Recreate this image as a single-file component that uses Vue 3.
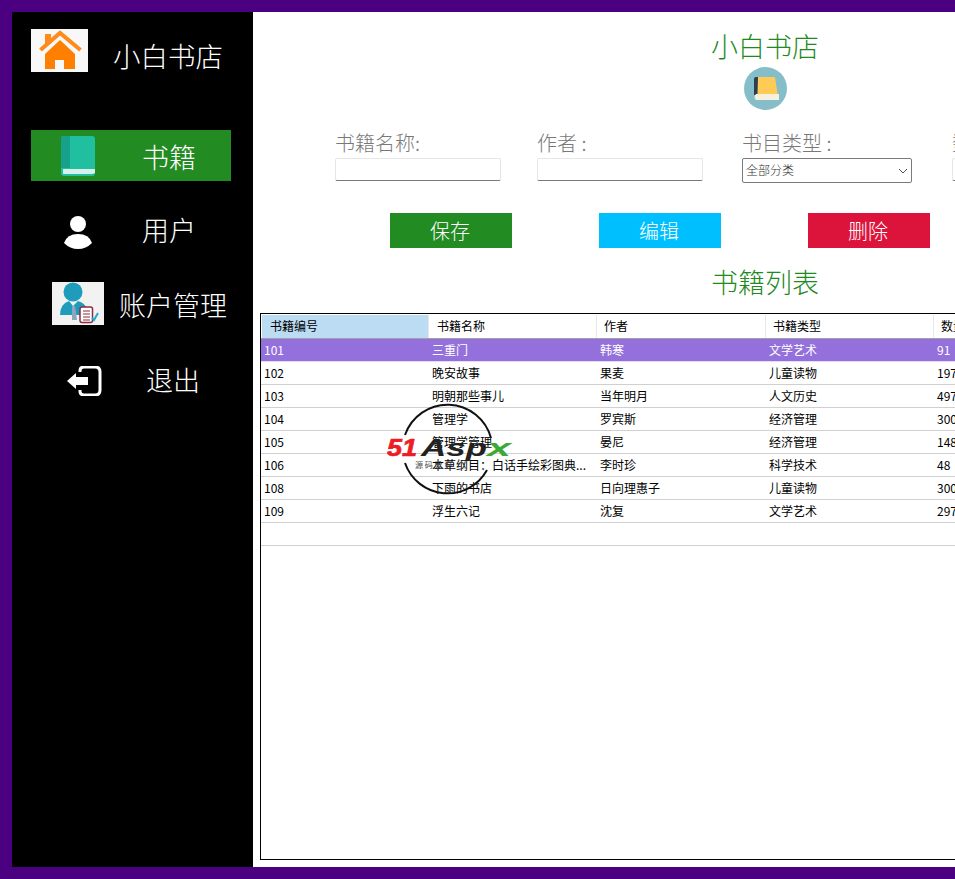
<script setup>
const columns = [
  { label: '书籍编号', w: 168 },
  { label: '书籍名称', w: 168 },
  { label: '作者', w: 169 },
  { label: '书籍类型', w: 168 },
  { label: '数量', w: 120 }
]
const books = [
  ['101', '三重门', '韩寒', '文学艺术', '91'],
  ['102', '晚安故事', '果麦', '儿童读物', '197'],
  ['103', '明朝那些事儿', '当年明月', '人文历史', '497'],
  ['104', '管理学', '罗宾斯', '经济管理', '300'],
  ['105', '管理学管理', '晏尼', '经济管理', '148'],
  ['106', '本草纲目：白话手绘彩图典...', '李时珍', '科学技术', '48'],
  ['108', '下雨的书店', '日向理惠子', '儿童读物', '300'],
  ['109', '浮生六记', '沈复', '文学艺术', '297'],
  ['', '', '', '', '']
]
</script>

<template>
  <div class="page">
    <aside class="side">
      <div class="brand">
        <div class="home-box">
          <svg width="57" height="43" viewBox="0 0 57 43">
            <rect x="14" y="5" width="6" height="10" fill="#ff8c1a" />
            <path d="M29 11 L44 25 V40 H33 V31 H24 V40 H14 V25 Z" fill="#ff8000" />
            <path d="M9.5 21 L29 4 L49.5 21" fill="none" stroke="#ff8c1a" stroke-width="4" />
          </svg>
        </div>
        <span class="brand-name">小白书店</span>
      </div>
      <nav class="menu">
        <div class="item active">
          <span class="slot slot-book">
            <svg width="34" height="40" viewBox="0 0 34 40">
              <rect width="34" height="40" rx="3" fill="#1fbf9f" />
              <path d="M3 0 H9 V32 H0 V3 Q0 0 3 0 Z" fill="#17a08c" />
              <path d="M2 33 H34 V37 Q33 38 30 38 H2 Z" fill="#d9efe9" />
            </svg>
          </span>
          <span class="label l-book">书籍</span>
        </div>
        <div class="item">
          <span class="slot slot-user">
            <svg width="28" height="34" viewBox="0 0 28 34">
              <circle cx="14" cy="8" r="8" fill="#fff" />
              <path d="M0 27 Q3 18 14 18 Q25 18 28 27 Q22 33 14 33 Q6 33 0 27 Z" fill="#fff" />
            </svg>
          </span>
          <span class="label l-user">用户</span>
        </div>
        <div class="item">
          <span class="account-box">
            <svg width="52" height="43" viewBox="0 0 52 43">
              <circle cx="21" cy="10" r="9.5" fill="#1f9cbc" />
              <path d="M8 33 Q8 22 17 19 L21 24 L26 19 Q33 21 35 27 V33 Z" fill="#1f9cbc" />
              <path d="M20 24 L23 24 L25 38 H20 Z" fill="#8fa4bd" />
              <rect x="28" y="25" width="12.5" height="15.5" rx="2" fill="#fff" stroke="#8a2d3f" stroke-width="1.5" />
              <path d="M31 29 H38 M31 32 H38 M31 35 H38 M31 38 H38" stroke="#8a2d3f" stroke-width="1.2" />
              <path d="M40 36 L42 38 L46 31" fill="none" stroke="#2aa7c9" stroke-width="2" />
            </svg>
          </span>
          <span class="label l-account">账户管理</span>
        </div>
        <div class="item">
          <span class="slot slot-exit">
            <svg width="36" height="30" viewBox="0 0 36 30">
              <path d="M14 6 V5 Q14 1 18 1 H29 Q34 1 34 6 V24 Q34 29 29 29 H18 Q14 29 14 25 V24" fill="none" stroke="#fff" stroke-width="3" />
              <path d="M1 15 L10 7 V11 H22 V19 H10 V23 Z" fill="#fff" />
            </svg>
          </span>
          <span class="label l-exit">退出</span>
        </div>
      </nav>
    </aside>

    <main class="main">
      <div class="inner">
        <h1 class="title">小白书店</h1>
        <div class="logo">
          <svg width="43" height="43" viewBox="0 0 43 43">
            <circle cx="21.5" cy="21.5" r="21.5" fill="#85bdc9" />
            <path d="M12 10 H15 V28 H10 V12 Q10 10 12 10 Z" fill="#2c3e50" />
            <path d="M14 10 H31 L33.5 27 H13.5 Z" fill="#ffcb57" />
            <path d="M12 27 H35 V33 H12 Q9 30 12 27 Z" fill="#f6f1de" />
          </svg>
        </div>

        <form class="fields">
          <label class="field f1">
            <span>书籍名称:</span>
            <input type="text" />
          </label>
          <label class="field f2">
            <span>作者 :</span>
            <input type="text" />
          </label>
          <label class="field f3">
            <span>书目类型 :</span>
            <span class="select-wrap">
              <select><option>全部分类</option></select>
              <svg class="chev" width="10" height="6" viewBox="0 0 10 6"><path d="M1 1 L5 5 L9 1" fill="none" stroke="#555" /></svg>
            </span>
          </label>
          <label class="field f4">
            <span>数量 :</span>
            <input type="text" />
          </label>
        </form>

        <div class="actions">
          <button type="button" class="btn save">保存</button>
          <button type="button" class="btn edit">编辑</button>
          <button type="button" class="btn del">删除</button>
        </div>

        <h2 class="title list-title">书籍列表</h2>

        <div class="table">
          <div class="thead">
            <div v-for="(c, i) in columns" :key="c.label" class="th" :class="{ sorted: i === 0 }" :style="{ width: c.w + 'px' }">{{ c.label }}</div>
          </div>
          <div v-for="(row, r) in books" :key="r" class="tr" :class="{ selected: r === 0 }">
            <div v-for="(cell, i) in row" :key="i" class="td" :style="{ width: columns[i].w + 'px' }">{{ cell }}</div>
          </div>

          <svg class="watermark" width="126" height="96" viewBox="0 0 126 96">
            <path d="M18 33 A45 45 0 0 1 104 36" fill="none" stroke="#111" stroke-width="2" />
            <path d="M18 61 A45 45 0 0 0 100 68" fill="none" stroke="#111" stroke-width="2" />
            <text x="0" y="54" class="wm-51" textLength="30" lengthAdjust="spacingAndGlyphs">51</text>
            <text x="34" y="54" class="wm-asp" textLength="66" lengthAdjust="spacingAndGlyphs">Asp</text>
            <text x="100" y="54" class="wm-x" textLength="24" lengthAdjust="spacingAndGlyphs">x</text>
            <text x="28" y="66" class="wm-small">源 码 爱 好</text>
          </svg>
        </div>
      </div>
    </main>
  </div>
</template>

<style>
html, body { margin: 0; background: #4b0082; }
</style>

<style scoped>
.page {
  width: 955px;
  height: 879px;
  box-sizing: border-box;
  padding: 12px 0 12px 12px;
  display: flex;
  background: #4b0082;
  overflow: hidden;
  font-family: "Noto Sans CJK SC", "Liberation Sans", sans-serif;
  font-weight: 300;
}
.side {
  width: 241px;
  flex: none;
  background: #000;
  color: #fff;
  box-sizing: border-box;
  padding: 17px 0 0 19px;
}
.brand { display: flex; align-items: flex-start; height: 101px; }
.home-box {
  width: 57px;
  height: 43px;
  background: #f8f8f8;
  display: flex;
}
.brand-name { margin: 5px 0 0 25px; font-size: 27.5px; line-height: 43px; }
.menu { display: flex; flex-direction: column; gap: 24px; }
.item { width: 200px; height: 51px; display: flex; align-items: center; }
.item.active { background: #228b22; }
.label { font-size: 27px; line-height: 51px; white-space: nowrap; }
.slot { display: flex; flex: none; }
.slot-book { margin-left: 30px; }
.l-book { margin-left: 47px; margin-top: 2px; }
.slot-user { margin-left: 33px; margin-top: 4px; }
.l-user { margin-left: 50px; margin-top: -2px; }
.account-box {
  flex: none;
  width: 52px;
  height: 43px;
  margin-left: 21px;
  margin-top: -4px;
  background: #f2f2f2;
  display: flex;
}
.l-account { margin-left: 15px; margin-top: -2px; }
.slot-exit { margin-left: 35px; }
.l-exit { margin-left: 44px; margin-top: -2px; }

.main { flex: none; width: 702px; background: #fff; overflow: hidden; }
.inner { width: 1024px; }
.title {
  margin: 0;
  font-size: 27px;
  line-height: 36px;
  font-weight: 300;
  color: #1f8a1f;
  text-align: center;
}
.inner > .title:first-child { padding-top: 16px; }
.logo { display: flex; justify-content: center; margin-top: 3px; }
.fields { display: flex; align-items: flex-start; margin-top: 18px; padding-left: 82px; }
.field { display: flex; flex-direction: column; flex: none; color: #787878; font-size: 20px; line-height: 30px; white-space: nowrap; }
.f1 { width: 202px; }
.f2 { width: 205px; }
.f3 { width: 210px; }
.field input {
  width: 166px;
  height: 23px;
  box-sizing: border-box;
  border: 1px solid #e6e6e6;
  border-bottom-color: #7a7a7a;
  border-radius: 2px;
  background: #fff;
  outline: none;
}
.select-wrap { position: relative; display: block; width: 170px; height: 25px; }
.select-wrap select {
  display: block;
  appearance: none;
  width: 100%;
  height: 100%;
  box-sizing: border-box;
  border: 1px solid #7a7a7a;
  border-radius: 2px;
  background: #fff;
  padding: 0 3px 2px;
  font: 300 12px "Noto Sans CJK SC", sans-serif;
  color: #333;
}
.chev { position: absolute; right: 4px; top: 10px; }
.actions { display: flex; gap: 87px; margin-top: 30px; padding-left: 137px; }
.btn {
  width: 122px;
  height: 35px;
  flex: none;
  border: 0;
  padding: 0 2px 0 0;
  color: #fff;
  font: 300 20px "Noto Sans CJK SC", sans-serif;
}
.save { background: #228b22; }
.edit { background: #00bfff; }
.del { background: #dc143c; }
.list-title { margin-top: 16px; }
.table {
  position: relative;
  margin: 13px 0 0 7px;
  width: 1000px;
  height: 547px;
  box-sizing: border-box;
  border: 1px solid #000;
  overflow: hidden;
  font-size: 12px;
  color: #000;
  font-weight: 400;
  padding-top: 1px;
}
.thead {
  display: flex;
  height: 24px;
  box-sizing: border-box;
  border-bottom: 1px solid #a0a0a0;
  padding-left: 1px;
}
.th {
  box-sizing: border-box;
  flex: none;
  padding-left: 7px;
  line-height: 21px;
  border-right: 1px solid #e8e8e8;
}
.th:nth-child(-n+2) { padding-left: 8px; }
.th:first-child { width: 167px !important; }
.th.sorted { background: #bbdcf3; }
.tr {
  display: flex;
  height: 23px;
  box-sizing: border-box;
  border-bottom: 1px solid #d0d0d0;
}
.tr.selected { background: #9370db; color: #fff; border-bottom-color: #e6dcf7; }
.td {
  box-sizing: border-box;
  flex: none;
  padding-left: 3px;
  line-height: 22px;
  white-space: nowrap;
}
.watermark { position: absolute; left: 126px; top: 88px; pointer-events: none; }
.wm-51 { font: italic 700 24px "Liberation Sans", sans-serif; fill: #ee1c25; stroke: #ee1c25; stroke-width: 0.7px; }
.wm-asp { font: italic 700 24px "Liberation Sans", sans-serif; fill: #222; }
.wm-x { font: italic 700 24px "Liberation Sans", sans-serif; fill: #3aa935; }
.wm-small { font: 400 8px "Noto Sans CJK SC", sans-serif; fill: #444; }
</style>
